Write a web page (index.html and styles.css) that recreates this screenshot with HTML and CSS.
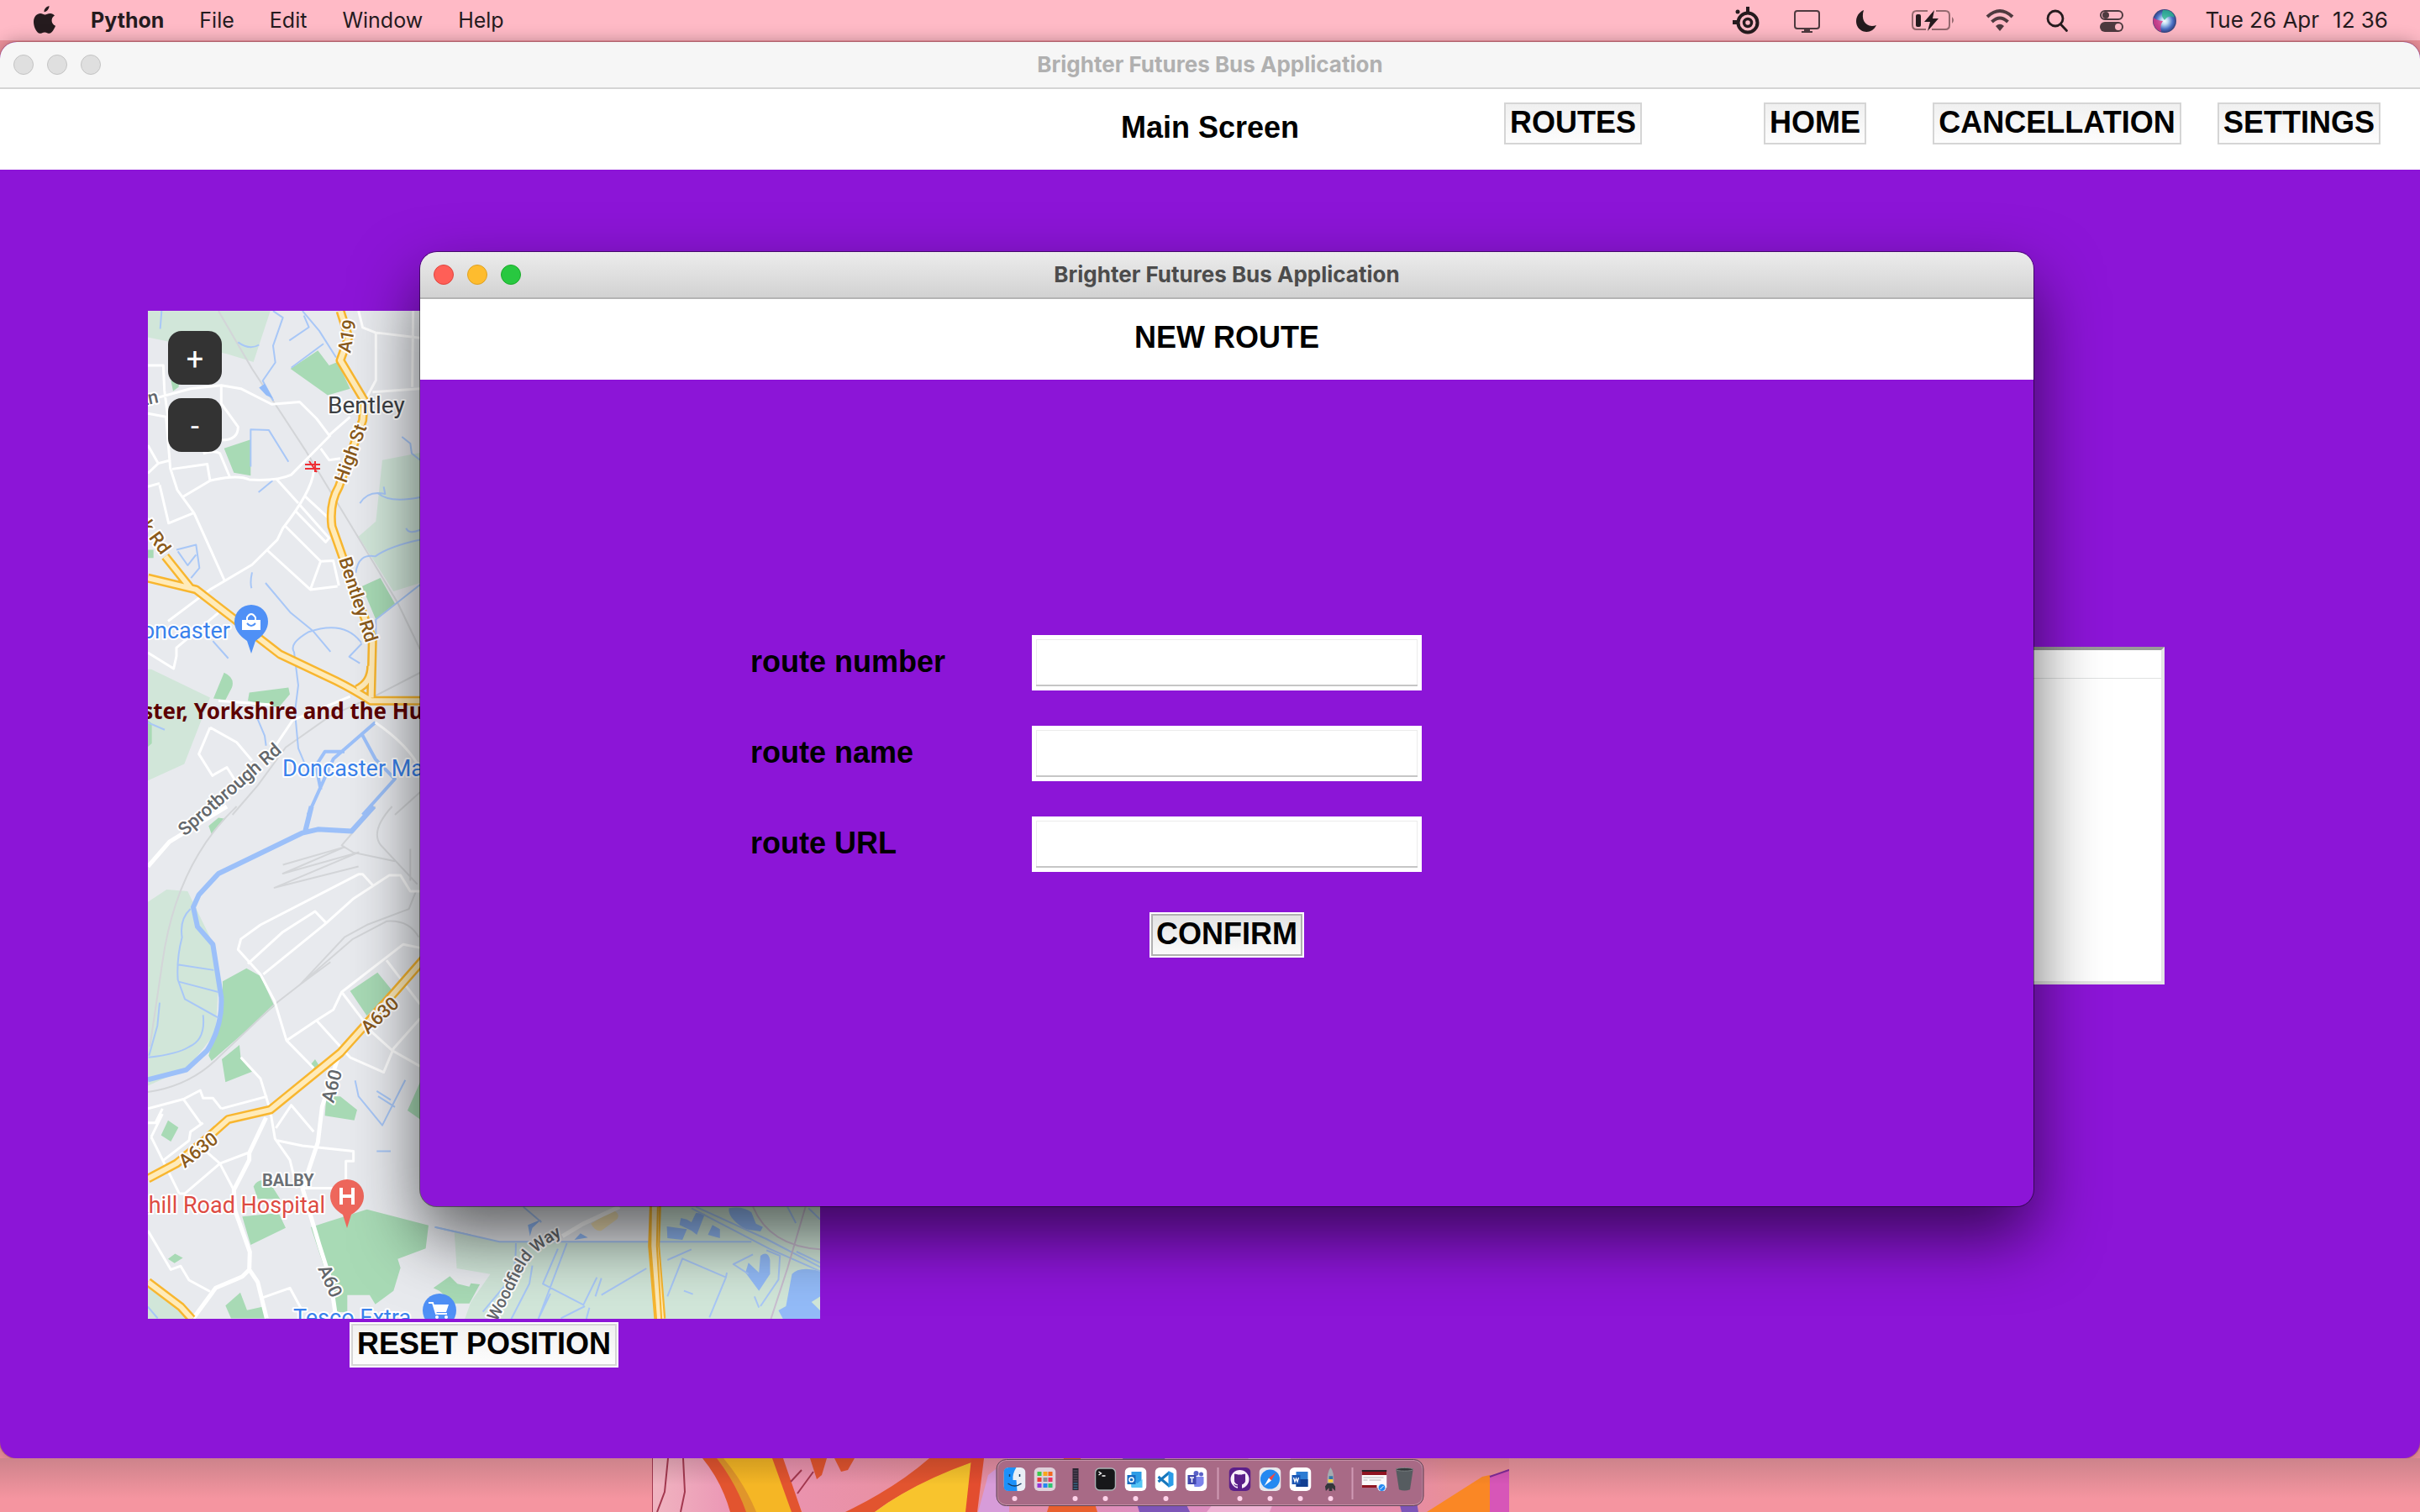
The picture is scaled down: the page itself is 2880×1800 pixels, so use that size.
FILE: index.html
```html
<!DOCTYPE html>
<html lang="en">
<head>
<meta charset="utf-8">
<title>Brighter Futures Bus Application</title>
<link rel="stylesheet" href="styles.css">
</head>
<body>
<div class="desktop">
  <header class="menubar">
    <nav class="menus" aria-label="Menu bar">
      <svg class="apple" viewBox="0 0 26 34" aria-label="Apple"><path d="M18.5 0c.3 3-2.600 7.200-6 7.200C12.200 4 15 .7 18.500 0zM25 11.500c-5 3-4.300 10 1 12.300-1.200 3.500-4.200 8.900-7.200 9-2.200.1-3-1.400-5.600-1.400-2.700 0-3.500 1.300-5.600 1.400C4 33 0 25.500 0 19.300 0 12.500 4.200 9.200 8 9.100c2.400 0 4 1.500 5.600 1.500 1.500 0 3.600-1.700 6.500-1.500 1.700.1 3.700.9 4.900 2.400z"/></svg>
      <a class="app-name" href="#">Python</a>
      <a href="#">File</a>
      <a href="#">Edit</a>
      <a href="#">Window</a>
      <a href="#">Help</a>
    </nav>
    <div class="status">
      <svg width="36" height="34" viewBox="0 0 36 34"><g fill="none" stroke="#251b1e" stroke-width="4"><circle cx="20" cy="20" r="11.500"/><circle cx="20" cy="20" r="4.500" stroke-width="3.500"/></g><path d="M18 1h4v8h-4zM2 17h8v5H2z" fill="#251b1e"/><circle cx="8" cy="7" r="2.500" fill="#251b1e"/></svg>
      <svg width="40" height="34" viewBox="0 0 40 34"><rect x="6" y="6" width="29" height="21" rx="3" fill="none" stroke="#4e3a3f" stroke-width="2"/><path d="M17 27h7v3h3v2H14v-2h3z" fill="#4e3a3f"/></svg>
      <svg width="34" height="34" viewBox="0 0 34 34"><path d="M14 5C2 10 2 27 14 30.500c6 1.500 12-1 15-7.500C17 27 10 17 14 5z" fill="#251b1e"/></svg>
      <svg width="56" height="34" viewBox="0 0 56 34"><path d="M22 6H9q-5 0-5 5v12q0 5 5 5h11M32 6h11q5 0 5 5v12q0 5-5 5H27" fill="none" stroke="#94696f" stroke-width="2"/><path d="M51 13q4 4 0 8z" fill="#94696f"/><rect x="8" y="10" width="6" height="15" rx="2" fill="#251b1e"/><path d="M30 5L18 19h7l-3 11 13-15h-7z" fill="#251b1e"/></svg>
      <svg width="36" height="34" viewBox="0 0 36 34"><g fill="none" stroke="#4e3a3f" stroke-width="4"><path d="M3 13q15-14 30 0M8.500 19q9.500-9 19 0"/></g><path d="M13 24q5-4.500 10 0l-5 6z" fill="#4e3a3f"/></svg>
      <svg width="32" height="34" viewBox="0 0 32 34"><g fill="none" stroke="#251b1e" stroke-width="2.800" stroke-linecap="round"><circle cx="14" cy="15" r="9"/><path d="M20.500 22l7 7.500"/></g></svg>
      <svg width="30" height="34" viewBox="0 0 30 34"><rect x="2" y="6" width="26" height="10" rx="5" fill="none" stroke="#4e3a3f" stroke-width="2"/><circle cx="8" cy="11" r="4" fill="#4e3a3f"/><rect x="1" y="19" width="28" height="12" rx="6" fill="#4e3a3f"/><circle cx="23" cy="25" r="4" fill="#ffbac6"/></svg>
      <svg width="28" height="34" viewBox="0 0 28 34"><defs><radialGradient id="siri"><stop offset="0" stop-color="#fff"/><stop offset=".3" stop-color="#b9d8f2"/><stop offset=".7" stop-color="#4a6fc4"/><stop offset="1" stop-color="#33407a"/></radialGradient></defs><circle cx="14" cy="18" r="14" fill="url(#siri)"/><path d="M1 14a14 14 0 0 0 9 17q-2-8 2-13Q4 17 1 14z" fill="#e0357f" opacity=".8"/><path d="M12 5q12-1 14 9-7-4-12 3-5-5-2-12z" fill="#2bb58c" opacity=".8"/></svg>
      <time class="clock"><span>Tue 26 Apr</span><span>12 36</span></time>
    </div>
  </header>

  <section class="window main-window">
    <div class="titlebar inactive"><span class="lights"><i></i><i></i><i></i></span><h1>Brighter Futures Bus Application</h1></div>
    <nav class="app-header">
      <h2>Main Screen</h2>
      <button class="btn routes">ROUTES</button>
      <button class="btn home">HOME</button>
      <button class="btn cancellation">CANCELLATION</button>
      <button class="btn settings">SETTINGS</button>
    </nav>
    <main class="app-body">
      <div class="map-column">
        <div class="map">
          <svg class="map-art" viewBox="0 0 800 1200" preserveAspectRatio="xMinYMin slice" aria-label="Map of Doncaster">
            <rect width="800" height="1200" fill="#e8eaee"/>
            <!-- northern area -->
            <g transform="matrix(.3333 0 0 .3954 -16 -20)">
              <path class="pale" d="M48 51H485L425 205 330 180 48 130zM885 500L1020 478V870L925 895 800 730 862 685zM60 1130L270 1215 178 1415 48 1465V1130z"/>
              <path class="green" d="M557 225L655 170 695 215 725 205 770 285 690 305zM130 260h28v20l-20 12zM320 465L415 438V547L355 538zM812 880L878 855 930 932 862 980zM320 1140q40 15 28 45L325 1222 282 1218zM410 1200L550 1185 555 1205 515 1245 405 1225zM48 1283l14 10v60l-14 10zM48 770h20v25h-20z"/>
              <path class="rail" d="M300 51L420 225 610 470 790 720 940 930 1020 1070M1020 1140L860 1210 700 1270 540 1365 440 1480 350 1568M1020 1500L930 1568"/>
              <g class="river"><path d="M97 51L92 105M495 51l35 20-35 85 8 50-45 55 38 60M600 51l60 60 60 80M605 65l18 35-70 40M560 222l115-72M370 145q40 25 75 8M415 520V408l65 2 70 95M443 597l50-35M955 430l30 20 5 30 30 20M805 630q30-40 90-28l-5-22M870 600q40 30 150 12M790 840q10-60 70-50 50-30 160-50M1020 875L862 980V1040M150 770l70-15 12 70-30 30M155 775l35 42 30-32M420 838q-8 30-2 48M468 870l90 90 80 55 62 62M810 1050q-60-70-190-32-70 35-50 60l15 100-12 80 12 110 25 50M805 1112l-38-20 45-40M48 1290l60 22M440 1280l25 50 5 30M280 1045l55 52M970 705q10 20 50 5"/></g>
              <path class="canal" d="M860 1290L710 1400 620 1568M812 1325L860 1400 930 1460 815 1568M750 1378H680L648 1420 665 1492"/>
              <path class="lake" d="M445 282L465 270 495 315 470 305z"/>
              <g class="road"><path d="M48 320L200 285 310 275 380 285 490 332 590 325 650 375 695 425 770 370M850 295L1020 285M800 51l15 50 45 15L1020 132M862 115V260L830 310M995 51L992 280M48 215H103L107 290M48 360l65 10 15 155 25 65 60 70 110 205M107 290l20 130M48 455L85 510 48 540M85 510l45-10M135 527l125-15 10 50-100 50M270 562q100-20 140-3 100 5 150-15L700 425M310 275V330l60 70q0 40-60 40M245 480q40-10 60 0l35 70M90 575L122 690 210 660M48 580l42-10M505 555l80 75M640 535q-8 60-110 170L510 740 420 815 270 890 120 985M610 610L700 680M590 635l105 100-12 12-110-95M540 700l125 105 45-2 20 75M665 805L628 890 725 880M475 772L628 890M665 465l30 35 40-5M270 1305L230 1385 278 1450 330 1425 360 1465M270 1305l95 45 55 55M48 1080L140 1128 150 1090 150 1065 300 960M300 1225l190 12M770 1212L565 1283 480 1390M860 1290Q980 1360 1020 1430"/></g>
              <path class="major" d="M735 51L765 130 735 200 820 320 815 380 730 580Q695 630 705 700L780 880 850 1040 845 1215M48 855L220 890 520 1085 720 1165Q780 1190 845 1225L1020 1225M110 790L200 885M845 1120Q845 1170 795 1190"/>
              <path class="major-fill" d="M735 51L765 130 735 200 820 320 815 380 730 580Q695 630 705 700L780 880 850 1040 845 1215M48 855L220 890 520 1085 720 1165Q780 1190 845 1225L1020 1225M110 790L200 885M845 1120Q845 1170 795 1190"/>
            </g>
            <!-- southern area -->
            <g transform="matrix(.3333 0 0 .42092 -16 590)">
              <path class="pale" d="M48 270L115 235 190 240 270 370 300 500 290 640 190 740 48 790zM48 1360l170 90H48z"/>
              <path class="green" d="M265 55L300 32 325 35 275 78zM315 495L400 458 450 480 500 565 275 720 265 705 315 550zM312 715L375 675 380 715 420 750 325 780zM770 522L868 470 920 520 830 592zM95 930L120 888 157 908 130 948zM630 730L645 715 665 740 640 745zM680 875L685 820 735 820 795 858 785 888zM425 1075Q440 1050 480 1060L520 1110 440 1110zM385 1160L515 1150 540 1192 415 1240zM630 1190L690 1175 830 1140 1050 1185 1040 1250 940 1280 950 1305 925 1370 860 1408 840 1382H760V1430H720L680 1310zM325 1412L378 1375 402 1425 460 1415 475 1448H345zM120 1280l25-15 28 12-30 15zM975 860L1020 780V885z"/>
              <path class="rail" d="M365 0Q150 160 100 440L55 680M48 808Q200 790 300 710L500 560 590 505 780 375 900 325Q980 320 1015 370M700 440L590 505 750 370 830 335 980 290 1005 240M530 165l220-50-220 75 270-60-300 100 300-60M860 0L740 110 780 130 930 155M920 0Q840 70 880 110L1010 220M985 120V210"/>
              <path class="canal river-main" d="M855 0L775 70 655 65 600 75 300 190 230 250 210 285 225 340 280 390 310 540Q315 620 260 690L185 745 48 773M632 0L610 70"/>
              <g class="river"><path d="M200 290q-40 30-30 80-20 60-15 120L180 545 300 598M158 448l125 15M155 495L300 525M245 590q10 70-50 90-40 20-145 30M90 555L82 620 52 705M788 775l12 45 85 82 82-128M865 805l50 25M870 820l60 30M865 975h50M1073 1190l127 23M48 1415l35 33"/></g>
              <g class="road"><path d="M405 445L530 355 645 297 685 330 780 262 910 195H950L985 240H1020M460 475L685 330M450 475L370 405 380 375 450 335 800 192H815L850 222M450 475L500 550 543 662 650 605 710 575 740 525 960 390 1020 400M543 662L640 740M650 605L770 710 890 752 925 685 1020 600M900 435L1020 560M740 525L850 640 920 690 1020 735M380 710L450 770 485 860 502 940 555 1000 580 1080M48 855L175 828 235 803 245 825H280L310 855M175 828L240 900M310 855L475 820M245 895L200 920 195 945 105 1000M48 895L75 895 100 855M60 935L160 1095M60 935L100 870M160 1095H180L305 1010 405 980M255 975L305 1010 355 1085M505 910L560 845 640 920M510 945L600 960 782 975V1003H755V1080H600M48 1200L130 1310 165 1300 195 1340 270 1372M455 1390L555 1362 595 1420"/></g>
              <path class="road wide" d="M725 715L670 850 655 950 600 1080 660 1240 700 1340 720 1448M470 880L410 980V1000L355 1085 360 1145 412 1260 410 1310 385 1330 290 1362 210 1448M410 1310L440 1345 472 1448M48 170L125 100 330 0"/>
              <path class="major" d="M1035 430L930 525 735 697 485 858 335 885 250 945 150 1010 48 1053M48 1345L165 1415 205 1450"/>
              <path class="major-fill" d="M1035 430L930 525 735 697 485 858 335 885 250 945 150 1010 48 1053M48 1345L165 1415 205 1450"/>
            </g>
            <!-- lakes and parkland on the south-east side -->
            <g transform="matrix(.35714 0 0 .33333 304 1030)">
              <path class="pale" d="M170 200L320 235H825L820 0H1400V510H205L225 450 290 350 178 330z"/>
              <path class="green" d="M100 400L155 358 180 385 220 395 225 383 255 387 220 455 170 455 120 410z"/>
              <path class="sand" d="M625 170L700 122Q730 140 705 160L660 195Q640 200 625 170z"/>
              <path class="lake" d="M1085 115Q1130 105 1160 130L1175 170 1198 182 1190 198 1140 190Q1080 150 1085 115zM878 180L945 190 930 228 880 222zM925 150L945 155 960 165 975 132 1005 135 978 210 960 195 920 175zM1015 210L1030 175 1055 190V222zM1190 285Q1215 265 1222 300V350L1185 410 1140 345 1150 310 1185 345zM1295 350Q1320 320 1389 340V430L1360 450 1389 480V510H1265L1250 480 1275 465zM415 175L460 155 430 185 422 215zM570 228L590 205 615 220z"/>
              <g class="river"><path d="M105 182L320 235H1160M400 110L460 165M375 240Q375 340 355 370L265 485M430 320L420 385 360 510M545 240L450 510M515 260L465 385 600 460 645 362M490 420l-40 90M660 365L640 430M525 508L605 465M660 425L810 330M880 300L960 262M880 430L930 295 1075 362 1020 505M1078 345L1075 362M935 410l30 12M975 110L1210 225 1389 325M960 115L1220 260 1389 340M1165 280L1100 315 1150 350M1210 265L1255 285 1250 370 1190 465M1280 110L1308 168M1350 115L1389 155M1310 270L1389 310M620 470L610 510M1170 430l15 40"/></g>
              <path class="tram" d="M1165 110Q1220 250 1389 262M1340 110L1280 330 1225 510"/>
              <path class="road wide" d="M530 215L600 170 720 110"/>
              <path class="major south" d="M840 100L835 250 855 510"/><path class="major-fill south" d="M840 100L838 250 857 510"/><path class="lane" d="M848 110L845 250 860 510"/>
            </g>
            <g class="station"><path d="M187 183h18M187 188h18M192 179l9 13M199 179v13M390 614h14M390 619h14M396 610l8 12"/></g>
            <g class="place"><text x="214" y="122" font-size="28">Bentley</text></g>
            <g class="roadname">
              <text transform="translate(241 51) rotate(-80)">A19</text>
              <text transform="translate(236 206) rotate(-70)">High St</text>
              <text transform="translate(227 296) rotate(72)">Bentley Rd</text>
              <text transform="translate(-14 250) rotate(54)">rk Rd</text>
              <text transform="translate(262 862) rotate(-43)">A630</text>
              <text transform="translate(44 1021) rotate(-38)">A630</text>
            </g>
            <g class="streetname">
              <text transform="translate(-10 114) rotate(-12)">Ln</text>
              <text transform="translate(44 626) rotate(-41)">Sprotbrough Rd</text>
              <text transform="translate(221 944) rotate(-75)">A60</text>
              <text transform="translate(202 1140) rotate(66)">A60</text>
              <path id="woodfield" d="M415 1204Q438 1160 449 1137 460 1118 498 1098L530 1080" fill="none"/>
              <text class="small"><textPath href="#woodfield">Woodfield Way</textPath></text>
            </g>
            <g class="shop">
              <text x="98" y="390" text-anchor="end">Doncaster</text>
              <text x="160" y="554">Doncaster Market</text>
              <text x="173" y="1208">Tesco Extra</text>
            </g>
            <text class="hospital" x="211" y="1074" text-anchor="end">Tickhill Road Hospital</text>
            <text class="suburb" x="136" y="1042">BALBY</text>
            <text class="caption" x="-88" y="486">Doncaster, Yorkshire and the Humber, England</text>
            <path d="M123 408L118 393Q103 383 103 370A20 20 0 0 1 143 370Q143 383 128 393z" fill="#4f90f6"/>
            <path d="M112 368h22v12h-22z" fill="#fff"/><path d="M118 368v-3q5-8 10 0v3M118 372q5 7 10 0" fill="none" stroke="#fff" stroke-width="2"/><path d="M118 372q5 6 10 0" fill="none" stroke="#4f90f6" stroke-width="2"/>
            <path d="M237 1092L232 1076Q217 1067 217 1054A20 20 0 0 1 257 1054Q257 1067 242 1076z" fill="#ee675c"/>
            <path d="M230 1044v20M244 1044v20M230 1054h14" stroke="#fff" stroke-width="4"/>
            <circle cx="347" cy="1190" r="20" fill="#4f90f6"/>
            <path d="M334 1181h5l4 13h13" fill="none" stroke="#fff" stroke-width="2"/><path d="M340 1183h18l-3 9h-12z" fill="#fff"/><circle cx="344" cy="1198" r="2" fill="#fff"/><circle cx="355" cy="1198" r="2" fill="#fff"/>
          </svg>
          <div class="zoom"><button aria-label="Zoom in">+</button><button aria-label="Zoom out">-</button></div>
        </div>
        <button class="btn framed">RESET POSITION</button>
      </div>
      <div class="route-list" role="listbox" aria-label="Routes"><div class="list-head"></div></div>
    </main>
  </section>

  <footer class="wallpaper">
    <svg class="artwork" viewBox="0 0 1020 64" preserveAspectRatio="none" aria-hidden="true">
      <defs>
        <linearGradient id="petal" x1="0" x2="1"><stop offset="0" stop-color="#f0b4c0"/><stop offset=".1" stop-color="#eb94b4"/><stop offset=".35" stop-color="#e88f9d"/><stop offset=".6" stop-color="#dc8ec4"/><stop offset=".85" stop-color="#e58aae"/><stop offset=".93" stop-color="#e98f98"/><stop offset="1" stop-color="#e98f98"/></linearGradient>
        <linearGradient id="shade" x1="0" x2="0" y1="0" y2="1"><stop offset="0" stop-opacity=".14"/><stop offset=".5" stop-opacity="0"/></linearGradient>
      </defs>
      <path d="M0 0H1020V64H0z" fill="url(#petal)"/>
      <path d="M68 0H152L178 64H105z" fill="#f5b625"/><path d="M85 0Q110 30 124 64H110L75 0z" fill="#e0952b"/>
      <path d="M60 0H77Q100 30 112 64H93Q83 28 60 0zM143 0h13L178 64H166zM188 0h20l-6 20-6 5zM217 0h24l-8 14-8 2zM230 64Q290 35 330 0H395Q310 30 265 64z" fill="#e2542f"/>
      <path d="M265 64Q310 30 380 5V64z" fill="#f8c42d"/><path d="M380 0h15l-8 64h-14z" fill="#e34d2f"/>
      <path d="M0 0V64M19 0L15 40 6 64M37 0l2 40-5 24M178 14L165 28M192 16L173 42" fill="none" stroke="#a3384f" stroke-width="2"/>
      <path d="M388 64L400 20 425 0V64z" fill="#d79cd9"/><path d="M470 64L490 0H510L530 64z" fill="#e9602e"/><path d="M560 0H610L640 64H580zM892 64L886 40H908L912 64z" fill="#7d55b8"/><path d="M660 64L710 0H760L735 64z" fill="#efb3d4"/>
      <path d="M922 64L988 22 997 20V64z" fill="#fa8725"/><path d="M997 21L1020 13V64H997z" fill="#d756b8"/><path d="M997 22L1020 14" stroke="#7e2c96" stroke-width="2"/>
      <path d="M0 0H1020V64H0z" fill="url(#shade)"/>
    </svg>
    <div class="dock">
      <button class="on" aria-label="Finder"><svg viewBox="0 0 26 28"><rect width="26" height="28" rx="6" fill="#e9eff6"/><path d="M6 0h9q-5 8-4 15h4l1 13H6q-6 0-6-6V6q0-6 6-6z" fill="#1c91fa"/><path d="M7 8v3M19 8v3M5 19q8 6 16 0" fill="none" stroke="#173b62" stroke-width="1.500"/></svg></button>
      <button aria-label="Launchpad"><svg viewBox="0 0 26 28"><rect width="26" height="28" rx="6" fill="#dfd0da"/><path d="M4 5h5v5H4z" fill="#3bc94a"/><path d="M11 5h5v5h-5z" fill="#f9a51a"/><path d="M17 5h5v5h-5z" fill="#f4671f"/><path d="M4 12h5v5H4z" fill="#ed3b3b"/><path d="M11 12h5v5h-5z" fill="#8b8d93"/><path d="M17 12h5v5h-5z" fill="#ea3366"/><path d="M4 19h5v5H4z" fill="#9237d8"/><path d="M11 19h5v5h-5z" fill="#2786f0"/><path d="M17 19h5v5h-5z" fill="#2fc572"/></svg></button>
      <button class="on" aria-label="Activity"><svg viewBox="0 0 26 28"><path d="M10 1h7v26h-7z" fill="#282431"/><path d="M11 4h5M11 7h5M11 10h5M11 13h5M11 16h5" stroke="#66566c"/><path d="M11 19h5M11 22h5M11 25h5" stroke="#438bb4"/></svg></button>
      <button class="on" aria-label="Terminal"><svg viewBox="0 0 26 28"><rect x="1" y="1" width="24" height="26" rx="5" fill="#17181a" stroke="#abb1b4" stroke-width="1.500"/><path d="M5 5l3 2-3 2M9 10h4" fill="none" stroke="#fff" stroke-width="1.300"/></svg></button>
      <button class="on" aria-label="Outlook"><svg viewBox="0 0 26 28"><rect width="26" height="28" rx="6" fill="#fff"/><path d="M8 5h12v18H8z" fill="#2e9de6"/><path d="M8 14l7 5 6-5v10H8z" fill="#55c5f5"/><rect x="3" y="9" width="10" height="11" fill="#176cc2"/><circle cx="8" cy="14.500" r="2.600" fill="none" stroke="#fff" stroke-width="1.500"/></svg></button>
      <button class="on" aria-label="Visual Studio Code"><svg viewBox="0 0 26 28"><rect width="26" height="28" rx="6" fill="#fff"/><path d="M4 11l13 11M4 17L17 6" stroke="#1677bd" stroke-width="3"/><path d="M16 4l6 3v14l-6 3z" fill="#2b9be8"/></svg></button>
      <button aria-label="Teams"><svg viewBox="0 0 26 28"><rect width="26" height="28" rx="6" fill="#fff"/><circle cx="13" cy="7" r="3" fill="#5a62c8"/><circle cx="19" cy="8" r="2.500" fill="#5a62c8"/><path d="M9 11h13v8q-2 4-6 4h-5z" fill="#7b83eb"/><path d="M3 9h10v11H3z" fill="#4248ae"/><path d="M5.500 12h5M8 12v6" stroke="#fff" stroke-width="1.500"/></svg></button>
      <span class="divider"></span>
      <button class="on" aria-label="GitHub"><svg viewBox="0 0 26 28"><rect width="26" height="28" rx="6" fill="#5b1f8a"/><circle cx="13" cy="14" r="11" fill="#f9eefa"/><path d="M7 8l4 1h4l4-1v5q1 6-4 7v5h-4v-5q-5-1-4-7zM6 20q2 3 5 2" fill="#5b1f8a" stroke="#5b1f8a"/></svg></button>
      <button class="on" aria-label="Safari"><svg viewBox="0 0 26 28"><rect width="26" height="28" rx="6" fill="#e7e7eb"/><circle cx="13" cy="14" r="11.500" fill="#2389f1"/><path d="M20 6l-5.500 9.500-3-3z" fill="#f2473f"/><path d="M6 22l5.500-9.500 3 3z" fill="#fff"/></svg></button>
      <button class="on" aria-label="Word"><svg viewBox="0 0 26 28"><rect width="26" height="28" rx="6" fill="#fff"/><path d="M8 5h14v18H8z" fill="#2b7cd3"/><path d="M8 14h14v9H8z" fill="#123f91"/><path d="M3 9h10v11H3z" fill="#1a56b4"/><path d="M5 12l1.500 5L8 13l1.500 4L11 12" fill="none" stroke="#fff" stroke-width="1.300"/></svg></button>
      <button class="on" aria-label="Python Launcher"><svg viewBox="0 0 26 30"><path d="M13 0Q8 6 9 21h8Q18 6 13 0z" fill="#a5abb0"/><path d="M9 20l-3 4 1 6 4-4v4h4v-4l4 4v-6l-3-4z" fill="#34363a"/><path d="M11 11h5v5h-5z" fill="#3474a9"/><path d="M10 15h6v4h-6z" fill="#f7cc40"/></svg></button>
      <span class="divider"></span>
      <button class="thumb" aria-label="Minimised Safari window"><svg viewBox="0 0 30 28"><path d="M0 3h30v21H0z" fill="#fafafa"/><path d="M0 3h30v6H0zM0 21h18v3H0z" fill="#8e1420"/><path d="M0 3h30v2H0z" fill="#252529"/><path d="M2 12h24M2 15h5M9 15h14" stroke="#b4b4b7"/><circle cx="24" cy="24" r="4.500" fill="#2389f1" stroke="#fff"/><path d="M22 26l4-4" stroke="#fff"/></svg></button>
      <button aria-label="Bin"><svg viewBox="0 0 26 30"><path d="M2 2h22l-4 26q-7 3-14 0z" fill="#565c60"/><ellipse cx="13" cy="2.500" rx="11" ry="2" fill="#33383b" stroke="#7f8487"/></svg></button>
    </div>
  </footer>

  <section class="window dialog" role="dialog" aria-label="New route">
    <div class="titlebar"><span class="lights"><i class="red"></i><i class="amber"></i><i class="green-light"></i></span><h1>Brighter Futures Bus Application</h1></div>
    <div class="dialog-header"><h2>NEW ROUTE</h2></div>
    <form class="route-form">
      <label for="number">route number</label><input id="number" type="text">
      <label for="name">route name</label><input id="name" type="text">
      <label for="url">route URL</label><input id="url" type="text">
      <button type="button" class="btn framed confirm">CONFIRM</button>
    </form>
  </section>
</div>
</body>
</html>
```
FILE: styles.css
```css
* { box-sizing: border-box; }

body {
  margin: 0;
  font-family: "Liberation Sans", Arial, sans-serif;
  color: #000;
  background: #ef929d;
}

h1, h2 { margin: 0; }

.desktop {
  position: relative;
  display: flex;
  flex-direction: column;
  min-height: 100vh;
}

/* menu bar */
.menubar {
  display: flex;
  justify-content: space-between;
  align-items: center;
  height: 48px;
  padding: 0 38px 0 40px;
  background: #ffbac6;
  font: 25px/46px Inter, "Liberation Sans", sans-serif;
  color: #251b1e;
}

.menus, .status, .clock { display: flex; align-items: center; }
.menus { gap: 42px; }
.menus a { color: inherit; text-decoration: none; }
.menus .app-name { font-weight: 700; }
.apple { width: 26px; height: 34px; fill: #251b1e; }
.status { gap: 34px; }
.clock { gap: 16px; font-size: 26px; white-space: nowrap; }

/* windows */
.window {
  display: flex;
  flex-direction: column;
  border-radius: 20px;
  overflow: hidden;
  background: #8c15d7;
}

.main-window {
  flex: 1;
  margin-top: 2px;
  box-shadow: 0 0 0 1px #b26470, 0 0 20px rgba(0, 0, 0, .3);
}

.titlebar {
  display: grid;
  grid-template-columns: 1fr auto 1fr;
  align-items: center;
  height: 56px;
  padding: 0 16px;
  border-bottom: 2px solid #b4b4b4;
  background: linear-gradient(#ececec, #d2d2d2);
  color: #4c4c4c;
}

.titlebar.inactive { background: #f6f6f6; border-color: #d4d4d4; color: #b0b0b0; }
.titlebar h1 { font: 700 26px/50px Inter, "Liberation Sans", sans-serif; }
.lights { display: flex; gap: 16px; }
.lights i { width: 24px; height: 24px; border: 1px solid #c3c3c3; border-radius: 50%; background: #dfdfdf; }
.lights .red { background: #ff5f57; border-color: #e0443e; }
.lights .amber { background: #febc2e; border-color: #dea123; }
.lights .green-light { background: #28c840; border-color: #1aab29; }

/* application header */
.app-header {
  display: grid;
  grid-template-columns: repeat(10, minmax(0, 1fr));
  height: 96px;
  background: #fff;
}

h2 { font-size: 36px; line-height: 92px; text-align: center; }
.app-header h2 { grid-area: 1 / 1 / 2 / -1; }
.app-header .btn { grid-row: 1; align-self: start; margin-top: 16px; }
.app-header .routes { grid-column: 7; }
.app-header .home { grid-column: 8; }
.app-header .cancellation { grid-column: 9; }
.app-header .settings { grid-column: 10; }
.cancellation { margin-left: -4px; margin-right: -4px; }

.btn {
  justify-self: center;
  height: 50px;
  padding: 0 5px 3px;
  border: 2px solid #d5d5d5;
  border-radius: 0;
  background: linear-gradient(#f0f0f0, #fdfdfd);
  font: 700 36px/42px "Liberation Sans", Arial, sans-serif;
  color: #000;
  white-space: nowrap;
}

.btn.framed { box-shadow: 0 0 0 2px #fff; }

/* main screen */
.app-body {
  flex: 1;
  display: flex;
  justify-content: space-between;
  align-items: flex-start;
  padding: 168px 304px 0 176px;
}

.map-column { display: flex; flex-direction: column; align-items: center; gap: 6px; }
.map { position: relative; width: 800px; height: 1200px; }
.map-art { display: block; width: 100%; height: 100%; }

.zoom { position: absolute; left: 24px; top: 24px; display: grid; gap: 16px; }
.zoom button {
  width: 64px;
  height: 64px;
  padding: 4px 0 0;
  border: 0;
  border-radius: 16px;
  background: #333;
  color: #fff;
  font: 36px/60px Roboto, sans-serif;
}

.route-list {
  width: 800px;
  height: 402px;
  margin-top: 400px;
  border: 4px solid #e5e5e5;
  border-top-color: #999;
  background: #fff;
}
.list-head { height: 34px; border-bottom: 1px solid #dfe1e1; }

/* map drawing */
.map-art path { vector-effect: non-scaling-stroke; }
.pale { fill: #d1e6d9; }
.green { fill: #a8dab5; }
.sand { fill: #f3e2b5; }
.lake { fill: #93bbf8; }
.rail, .river, .canal, .road, .major, .major-fill, .tram, .lane { fill: none; stroke-linejoin: round; }
.rail { stroke: #d3d5d8; stroke-width: 2; }
.river { stroke: #a8c7f7; stroke-width: 2; }
.canal { stroke: #9cc0f9; stroke-width: 4; }
.river-main { stroke-width: 6; }
.road { stroke: #fff; stroke-width: 3; }
.wide { stroke-width: 5; }
.major { stroke: #f8b62f; stroke-width: 11; }
.major-fill { stroke: #ffebb9; stroke-width: 6; }
.south { stroke-width: 14; }
.major-fill.south { stroke-width: 8; }
.lane { stroke: #f8b62f; stroke-width: 2; }
.tram { stroke: #c9bdd0; stroke-width: 2; }
.station { stroke: #ee2f35; stroke-width: 2; }
.map-art text { font-family: Roboto, sans-serif; paint-order: stroke; stroke: #fff; stroke-width: 4px; stroke-linejoin: round; }
.place text { fill: #3c4043; }
.roadname text { font-size: 22px; font-weight: 500; fill: #8a5a1c; }
.streetname text { font-size: 22px; font-weight: 500; fill: #63676b; }
.streetname .small { font-size: 20px; }
.shop text { font-size: 27px; fill: #3a82ec; }
.map-art .hospital { font-size: 27px; fill: #dd4b42; }
.map-art .suburb { font-size: 20px; font-weight: 700; fill: #6b7075; }
.map-art .caption { font: 700 26px "Noto Sans", sans-serif; fill: #5c0000; stroke: none; }

/* new route dialog */
.dialog {
  position: absolute;
  top: 300px;
  right: 460px;
  bottom: 364px;
  left: 500px;
  box-shadow: 0 0 0 1px rgba(0, 0, 0, .45), 0 36px 80px 0 rgba(0, 0, 0, .6);
}
.dialog-header { height: 96px; background: #fff; }

.route-form {
  flex: 1;
  display: grid;
  grid-template-columns: 335px 464px 335px;
  justify-content: center;
  align-content: center;
  row-gap: 42px;
  padding-top: 6px;
}
.route-form label { grid-column: 1; font-size: 36px; font-weight: 700; line-height: 64px; }
.route-form input {
  grid-column: 2;
  width: 100%;
  height: 66px;
  border: 5px solid #fff;
  border-radius: 0;
  background: #fff;
  box-shadow: inset 0 -2px #c6c6c6, inset 0 0 0 1px #ececec;
  font-size: 36px;
  outline: 0;
}
.confirm { grid-column: 2; margin-top: 8px; padding: 0 4px 3px; border-color: #b0b0b0; background: linear-gradient(#e3e3e3, #fafafa); }

/* desktop edge and dock */
.wallpaper {
  position: relative;
  height: 64px;
  padding-left: 776px;
  background: linear-gradient(#cd838b, #f595a0 75%);
}
.artwork { display: block; width: 1020px; height: 64px; }
.dock {
  position: absolute;
  left: 50%;
  top: 1px;
  transform: translateX(-50%);
  display: flex;
  align-items: flex-start;
  height: 56px;
  padding: 9px 4px 0 3px;
  border: 1px solid #604354;
  border-radius: 12px;
  background: #a86a86;
  box-shadow: inset 0 0 0 1px #c391a6;
}
.dock button { display: grid; justify-items: center; gap: 6px; width: 36px; padding: 0; border: 0; background: none; }
.dock svg { width: 26px; height: 28px; }
.dock .thumb svg { width: 30px; }
.dock .on::after { content: ""; width: 6px; height: 6px; border-radius: 50%; background: #ffd3ea; }
.divider { width: 2px; height: 38px; margin: 0 7px; background: #cf9ab4; }
```
